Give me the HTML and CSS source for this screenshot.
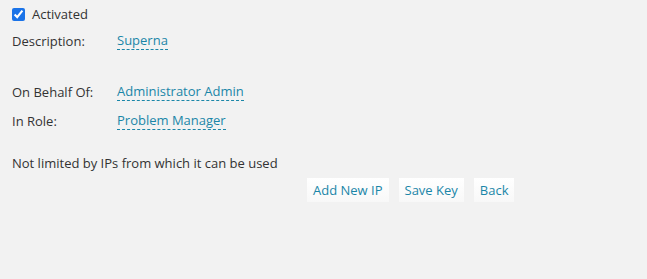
FILE: index.html
```html
<!DOCTYPE html>
<html lang="en">
<head>
    <meta charset="UTF-8">
    <title>API Key</title>
    <link rel="stylesheet" href="styles.css">
</head>
<body>
    <div class="key-form">
        <label class="check-row">
            <input type="checkbox" checked>
            <span>Activated</span>
        </label>
        <div class="field">
            <span class="field-label">Description:</span>
            <a class="editable">Superna</a>
        </div>
        <div class="field spaced">
            <span class="field-label">On Behalf Of:</span>
            <a class="editable">Administrator Admin</a>
        </div>
        <div class="field">
            <span class="field-label">In Role:</span>
            <a class="editable">Problem Manager</a>
        </div>
        <p class="note">Not limited by IPs from which it can be used</p>
        <div class="actions">
            <button>Add New IP</button>
            <button>Save Key</button>
            <button>Back</button>
        </div>
    </div>
</body>
</html>
```

FILE: styles.css
```css
body {
    margin: 0;
    background-color: #f2f2f2;
    font-family: "Open Sans", sans-serif;
    font-size: 13px;
    color: #333;
}
.key-form {
    padding: 4px 12px;
}
.check-row {
    display: flex;
    align-items: center;
    gap: 7px;
    height: 20px;
}
.check-row input {
    margin: 0;
    width: 13px;
    height: 13px;
    accent-color: #1a73e8;
}
.field {
    display: flex;
    align-items: center;
    height: 29px;
}
.field:first-of-type {
    margin-top: 2px;
}
.spaced {
    margin-top: 22px;
}
.field-label {
    width: 105px;
}
.editable {
    color: #1a86a8;
    border-bottom: 1px dashed #1a86a8;
    line-height: 17px;
    cursor: pointer;
}
.note {
    margin: 19px 0 0;
    line-height: 18px;
}
.actions {
    display: flex;
    gap: 10px;
    padding-left: 295px;
    margin-top: 6px;
}
.actions button {
    font-family: "Open Sans", sans-serif;
    font-size: 13px;
    color: #1a86a8;
    border: none;
    padding: 3px 6px;
    height: 24px;
    background: linear-gradient(#fff, #f8f8f8);
    cursor: pointer;
}
```
